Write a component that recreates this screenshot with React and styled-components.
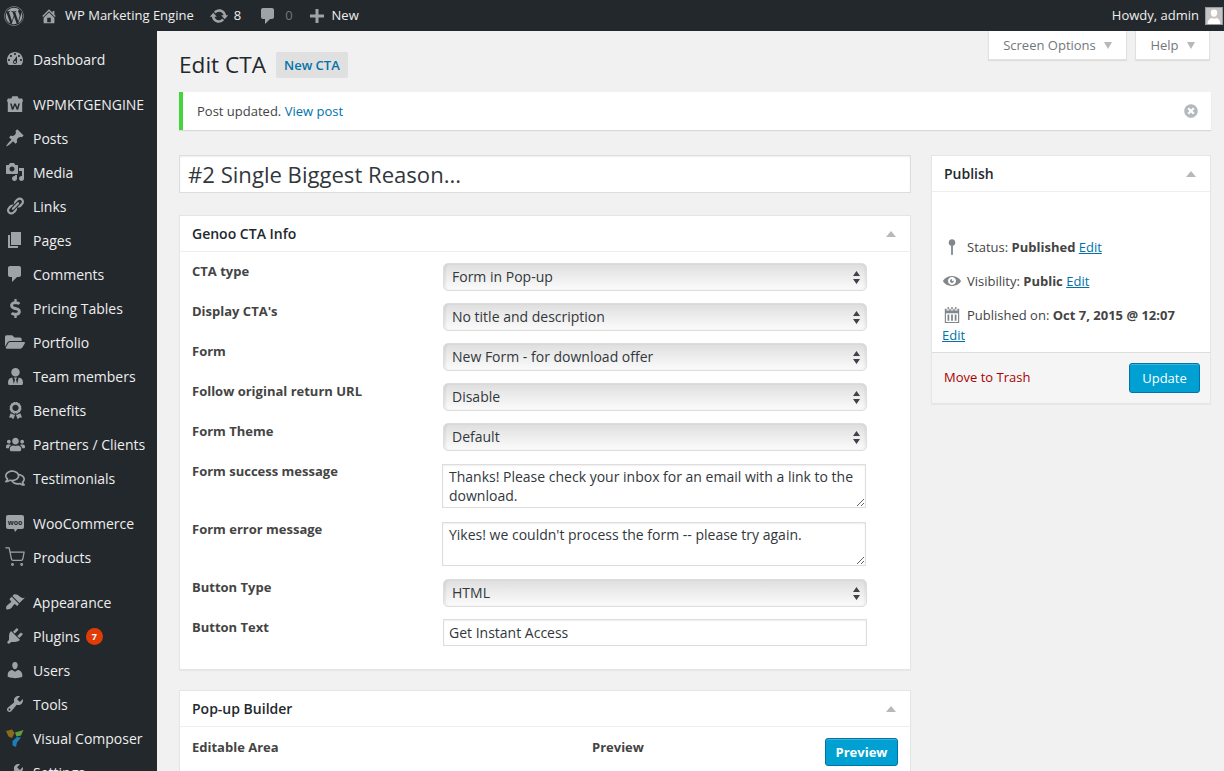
import React from "react";
import styled, { createGlobalStyle } from "styled-components";
import {
  FaWordpress,
  FaDollarSign,
  FaFolderOpen,
  FaUserTie,
  FaAward,
  FaUsers,
  FaRegComments,
  FaTimesCircle,
} from "react-icons/fa";
import { FiShoppingCart } from "react-icons/fi";

const D = {
  dashboard:
    "M3.76 16h12.48c1.1-1.37 1.76-3.11 1.76-5 0-4.42-3.58-8-8-8s-8 3.58-8 8c0 1.89.66 3.63 1.76 5zM10 4c.55 0 1 .45 1 1s-.45 1-1 1-1-.45-1-1 .45-1 1-1zM6 6c.55 0 1 .45 1 1s-.45 1-1 1-1-.45-1-1 .45-1 1-1zm8 0c.55 0 1 .45 1 1s-.45 1-1 1-1-.45-1-1 .45-1 1-1zm-5.37 5.55L12 7v6c0 1.1-.9 2-2 2s-2-.9-2-2c0-.57.24-1.08.63-1.45zM4 10c.55 0 1 .45 1 1s-.45 1-1 1-1-.45-1-1 .45-1 1-1zm12 0c.55 0 1 .45 1 1s-.45 1-1 1-1-.45-1-1 .45-1 1-1zm-5 3c0-.55-.45-1-1-1s-1 .45-1 1 .45 1 1 1 1-.45 1-1z",
  post: "M10.44 3.02l1.82-1.82 6.36 6.35-1.83 1.82c-1.05-.68-2.48-.57-3.41.36l-.75.75c-.92.93-1.04 2.35-.35 3.41l-1.83 1.82-2.41-2.41-2.8 2.79c-.42.42-3.38 2.71-3.8 2.29s1.86-3.39 2.28-3.81l2.79-2.79L4.1 9.36l1.83-1.82c1.05.69 2.48.57 3.4-.36l.75-.75c.93-.92 1.05-2.35.36-3.41z",
  media:
    "M13 11V4c0-.55-.45-1-1-1h-1.67L9 1H5L3.67 3H2c-.55 0-1 .45-1 1v7c0 .55.45 1 1 1h10c.55 0 1-.45 1-1zM7 4.5c1.38 0 2.5 1.12 2.5 2.5S8.38 9.5 7 9.5 4.5 8.38 4.5 7 5.62 4.5 7 4.5zM14 6h5v10.5c0 1.38-1.12 2.5-2.5 2.5S14 17.88 14 16.5s1.12-2.5 2.5-2.5c.17 0 .34.02.5.05V9h-3V6zm-4 8.05V13h2v3.5c0 1.38-1.12 2.5-2.5 2.5S7 17.88 7 16.5 8.12 14 9.5 14c.17 0 .34.02.5.05z",
  links:
    "M17.74 2.76c1.68 1.69 1.68 4.41 0 6.1l-1.53 1.52c-1.12 1.12-2.7 1.47-4.14 1.09l2.62-2.61.76-.77.76-.76c.84-.84.84-2.2 0-3.04-.84-.85-2.2-.85-3.04 0l-.77.76-3.38 3.38c-.37-1.44-.02-3.02 1.1-4.14l1.52-1.53c1.69-1.68 4.42-1.68 6.1 0zM8.59 13.43l5.34-5.34c.42-.42.42-1.1 0-1.52-.44-.43-1.13-.39-1.53 0l-5.33 5.34c-.42.42-.42 1.1 0 1.52.44.43 1.13.39 1.52 0zm-.76 2.29l4.14-4.15c.38 1.44.03 3.02-1.09 4.14l-1.52 1.53c-1.69 1.68-4.41 1.68-6.1 0-1.68-1.68-1.68-4.42 0-6.1l1.53-1.52c1.12-1.12 2.7-1.47 4.14-1.1l-4.14 4.15c-.85.84-.85 2.2 0 3.05.84.84 2.2.84 3.04 0z",
  page: "M6 15V2h10v13H6zm-1 1h8v2H3V5h2v11z",
  comment:
    "M5 2h9c1.1 0 2 .9 2 2v7c0 1.1-.9 2-2 2h-2l-5 5v-5H5c-1.1 0-2-.9-2-2V4c0-1.1.9-2 2-2z",
  appearance:
    "M14.48 11.06L7.41 3.99l1.5-1.5c.5-.56 2.3-.47 3.51.32 1.21.8 1.43 1.28 2.91 2.1 1.18.64 2.45 1.26 4.45.85zm-.71.71L6.7 4.7 4.93 6.47c-.39.39-.39 1.02 0 1.41l1.06 1.06c.39.39.39 1.03 0 1.42-.6.6-1.43 1.11-2.21 1.69-.35.26-.7.53-1.01.84C1.43 13.23.78 15.24 1.2 17.28c2.03.42 4.03-.24 5.37-1.57.31-.31.58-.66.84-1.01.58-.78 1.09-1.61 1.69-2.21.39-.39 1.02-.39 1.41 0l1.06 1.06c.39.39 1.02.39 1.41 0z",
  plugins:
    "M13.11 4.36L9.87 7.6 8 5.73l3.24-3.24c.35-.34 1.05-.2 1.56.32.52.51.66 1.21.31 1.55zm-8 1.77l.91-1.12 9.01 9.01-1.19.84c-.71.71-2.63 1.16-3.82 1.16H6.14L4.9 17.26c-.59.59-1.54.59-2.12 0-.59-.58-.59-1.53 0-2.12l1.24-1.24v-3.88c0-1.13.4-3.19 1.09-3.89zm7.26 3.97l3.24-3.24c.34-.35 1.04-.21 1.55.31.52.51.66 1.21.31 1.55l-3.24 3.25z",
  users:
    "M10 9.25c-2.27 0-2.73-3.44-2.73-3.44C7 4.02 7.82 2 9.97 2c2.16 0 2.98 2.02 2.71 3.81 0 0-.41 3.44-2.68 3.44zm0 2.57L12.72 10c2.39 0 4.52 2.33 4.52 4.53v2.49s-3.65 1.13-7.24 1.13c-3.65 0-7.24-1.13-7.24-1.13v-2.49c0-2.25 1.94-4.48 4.47-4.48z",
  tools:
    "M16.68 9.77c-1.34 1.34-3.3 1.67-4.95.99l-5.41 6.52c-.99.99-2.59.99-3.58 0s-.99-2.59 0-3.57l6.52-5.42c-.68-1.65-.35-3.61.99-4.95 1.28-1.28 3.12-1.62 4.72-1.06l-2.89 2.89 2.82 2.82 2.86-2.87c.53 1.58.18 3.39-1.08 4.65zM3.81 16.21c.4.39 1.04.39 1.43 0 .4-.4.4-1.04 0-1.43-.39-.4-1.03-.4-1.43 0-.39.39-.39 1.03 0 1.43z",
  home: "M16 8.5l1.53 1.53-1.06 1.06L10 4.62l-6.47 6.47-1.06-1.06L10 2.5l4 4v-2h2v4zm-6-2.46l6 5.99V18H4v-5.97zM12 17v-5H8v5h4z",
  update:
    "M10.2 3.28c3.53 0 6.43 2.61 6.92 6h2.08l-3.5 4-3.5-4h2.32c-.45-1.97-2.21-3.45-4.32-3.45-1.45 0-2.73.71-3.54 1.78L4.95 5.66C6.23 4.2 8.11 3.28 10.2 3.28zm-.4 13.44c-3.52 0-6.43-2.61-6.92-6H.8l3.5-4c1.17 1.33 2.33 2.67 3.5 4H5.48c.45 1.97 2.21 3.45 4.32 3.45 1.45 0 2.73-.71 3.54-1.78l1.71 1.95c-1.28 1.46-3.15 2.38-5.25 2.38z",
  plus: "M17 8.5v3h-5.5V17h-3v-5.5H3v-3h5.5V3h3v5.5H17z",
  eye: "M10 4.4C3.439 4.4 0 9.232 0 10c0 .766 3.439 5.6 10 5.6 6.56 0 10-4.834 10-5.6 0-.768-3.44-5.6-10-5.6zm0 9.907c-2.455 0-4.445-1.928-4.445-4.307S7.545 5.691 10 5.691s4.444 1.93 4.444 4.309-1.989 4.307-4.444 4.307zM10 10c-.407-.447.663-2.154 0-2.154-1.228 0-2.223.965-2.223 2.154s.995 2.154 2.223 2.154c1.227 0 2.223-1.828 2.223-2.154 0-.527-1.877.229-2.223 0z",
  pin: "M10 1.500a3.600 3.600 0 0 1 1 7.060V18l-1 1.500L9 18V8.560A3.600 3.600 0 0 1 10 1.500z",
  calendar:
    "M5 1h1.500v3H5V1zm8.500 0H15v3h-1.500V1zM9.200 1h1.600v3H9.200V1zM2 3h2v2h3V3h1.500v2h3V3H13v2h3V3h2v16H2V3zm1.300 5v9.700h13.400V8H3.300zM5 9.500h2v7H5v-7zm4 0h2v7H9v-7zm4 0h2v7h-2v-7z",
  bag: "M7 1.500h6L14 4h4l1 3-1 .8V19H2V7.800L1 7l1-3h4l1-2.500zM4.600 9.500l1.900 7h1.600l1.900-4.800 1.900 4.800h1.600l1.900-7h-1.700l-1.100 4.300-1.800-4.300H9.200l-1.800 4.300-1.100-4.300H4.600z",
};

const GlobalStyle = createGlobalStyle`
  html, body {
    margin: 0;
    height: 100%;
    overflow: hidden;
    background: #f1f1f1;
  }

  body {
    font-family: "Open Sans", sans-serif;
    font-size: 13px;
    color: #444;
  }

  * {
    box-sizing: border-box;
  }
`;

const Page = styled.div`
  height: 771px;
  overflow: hidden;
  display: flex;
  flex-direction: column;
`;

const TopBar = styled.header`
  flex: 0 0 31px;
  height: 31px;
  background: #23282d;
  color: #eee;
  display: flex;
  align-items: center;
  padding: 0 1px 0 4px;
  font-size: 13px;
  line-height: 31px;
`;

const BarIcon = styled.svg`
  width: ${({ size }) => size || 20}px;
  height: ${({ size }) => size || 20}px;
  fill: #9ea3a8;
  flex: none;
  display: block;
`;

const BarItem = styled.div`
  display: flex;
  align-items: center;
  gap: ${({ gap }) => gap || 8}px;
  margin-left: ${({ left }) => left || 0}px;
`;

const Faded = styled.span`
  color: #72777c;
`;

const Howdy = styled.div`
  margin-left: auto;
  display: flex;
  align-items: center;
  gap: 6px;
`;

const Avatar = styled.div`
  width: 18px;
  height: 18px;
  background: #f1f1f1;
  border: 1px solid #9a9a9a;
  overflow: hidden;
  flex: none;

  svg {
    display: block;
    width: 16px;
    height: 16px;
    background: #c4c4c4;
    fill: #fff;
  }
`;

const Body = styled.div`
  flex: 1;
  display: flex;
  min-height: 0;
`;

const Sidebar = styled.nav`
  flex: 0 0 157px;
  background: #23282d;
  padding-top: 11px;
  overflow: hidden;
`;

const MenuItem = styled.div`
  height: 34px;
  display: flex;
  align-items: center;
  color: #eee;
  font-size: 14px;
  margin-top: ${({ $sep }) => ($sep ? 11 : 0)}px;
  white-space: nowrap;
`;

const MenuIcon = styled.span`
  flex: 0 0 33px;
  padding-left: 5px;
  padding-right: 8px;
  display: flex;
  align-items: center;
  justify-content: center;
  color: #9ea3a8;

  svg {
    display: block;
    width: ${({ size }) => size || 20}px;
    height: ${({ size }) => size || 20}px;
    fill: currentColor;
    flex: none;
  }
`;

const CartIcon = styled(FiShoppingCart)`
  && {
    fill: none;
    stroke-width: 1.5;
  }
`;

const Badge = styled.span`
  display: inline-block;
  width: 17px;
  height: 17px;
  border-radius: 50%;
  background: #e23c06;
  color: #fff;
  font-size: 9px;
  font-weight: 700;
  line-height: 17px;
  text-align: center;
  margin-left: 6px;
`;

const Main = styled.main`
  flex: 1;
  min-width: 0;
  padding: 0 13px 0 22px;
  position: relative;
`;

const ScreenTabs = styled.div`
  display: flex;
  justify-content: flex-end;
  gap: 8px;
  padding-right: 1px;
`;

const ScreenTab = styled.div`
  height: 29px;
  width: ${({ width }) => width}px;
  background: #fff;
  border: 1px solid #e1e1e1;
  border-top: 0;
  box-shadow: 0 1px 1px rgba(0, 0, 0, 0.08);
  color: #72777c;
  display: flex;
  align-items: center;
  justify-content: center;
  gap: 8px;
  font-size: 13px;
`;

const Caret = styled.span`
  width: 0;
  height: 0;
  border-style: solid;
  border-color: #b4b9be transparent;
  border-width: ${({ $up }) => ($up ? "0 5px 6px" : "7px 4.5px 0")};
  flex: none;
`;

const Heading = styled.div`
  display: flex;
  align-items: center;
  gap: 10px;
  margin-top: -8px;
  height: 26px;
`;

const Title = styled.h1`
  margin: 0;
  font-size: 22.6px;
  font-weight: 400;
  color: #23282d;
  line-height: 26px;
`;

const AddNew = styled.a`
  background: #e0e0e0;
  color: #0073aa;
  font-size: 13px;
  font-weight: 600;
  height: 26px;
  line-height: 26px;
  padding: 0 8px;
  border-radius: 2px;
`;

const Notice = styled.div`
  margin-top: 14px;
  height: 38px;
  background: #fff;
  border-left: 4px solid #46d43c;
  box-shadow: 0 1px 1px rgba(0, 0, 0, 0.1);
  display: flex;
  align-items: center;
  padding: 0 13px 0 14px;
  font-size: 13px;
  color: #444;

  svg {
    margin-left: auto;
    width: 14px;
    height: 14px;
    fill: #b4b9be;
  }
`;

const Link = styled.a`
  color: #0073aa;
  text-decoration: ${({ $under }) => ($under ? "underline" : "none")};
`;

const Columns = styled.div`
  margin-top: 25px;
  display: grid;
  grid-template-columns: 732px 280px;
  gap: 20px;
  align-items: start;
`;

const Stack = styled.div`
  display: flex;
  flex-direction: column;
  min-width: 0;
`;

const TitleInput = styled.input`
  width: 100%;
  height: 38px;
  border: 1px solid #ddd;
  background: #fff;
  box-shadow: inset 0 1px 2px rgba(0, 0, 0, 0.07);
  font: 400 22.1px "Open Sans", sans-serif;
  color: #32373c;
  padding: 0 8px;
  margin: 0 0 22px;
  outline: none;
`;

const Box = styled.section`
  background: #fff;
  border: 1px solid #e5e5e5;
  box-shadow: 0 1px 1px rgba(0, 0, 0, 0.04);
  margin-bottom: 20px;
`;

const BoxHead = styled.div`
  height: 36px;
  display: flex;
  align-items: center;
  justify-content: space-between;
  padding: 0 14px 0 12px;
  border-bottom: 1px solid #eee;
  font-size: 14px;
  font-weight: 600;
  color: #23282d;
`;

const FormBody = styled.div`
  padding: 11px 12px 23px;
  display: flex;
  flex-direction: column;
`;

const Row = styled.div`
  display: grid;
  grid-template-columns: 251px 424px;
  margin-top: ${({ gap }) => gap || 0}px;
`;

const Label = styled.label`
  font-size: 13px;
  font-weight: 700;
  line-height: 16px;
  color: #444;
  margin-top: ${({ $raise }) => ($raise ? -1 : 0)}px;
`;

const SelectWrap = styled.div`
  position: relative;
  height: 28px;

  svg {
    position: absolute;
    right: 7px;
    top: 8px;
    width: 7px;
    height: 13px;
    fill: #3f4347;
    pointer-events: none;
  }
`;

const Select = styled.select`
  appearance: none;
  width: 100%;
  height: 28px;
  border: 1px solid #ddd;
  border-radius: 5px;
  background: linear-gradient(#dedede, #ececec 45%, #fbfbfb);
  box-shadow: inset 2px 0 2px rgba(0, 0, 0, 0.06), inset -2px 0 2px rgba(0, 0, 0, 0.04);
  font: 400 14px "Open Sans", sans-serif;
  color: #32373c;
  padding: 0 8px 2px;
  outline: none;
`;

const Textarea = styled.textarea`
  display: block;
  width: 424px;
  height: 44px;
  margin-left: -1px;
  border: 1px solid #ddd;
  background: #fff;
  box-shadow: inset 0 1px 2px rgba(0, 0, 0, 0.07);
  font: 400 14px/19px "Open Sans", sans-serif;
  color: #32373c;
  padding: 2px 6px;
  resize: both;
  outline: none;
`;

const TextInput = styled.input`
  display: block;
  width: 424px;
  height: 27px;
  border: 1px solid #ddd;
  background: #fff;
  box-shadow: inset 0 1px 2px rgba(0, 0, 0, 0.07);
  font: 400 14px "Open Sans", sans-serif;
  color: #32373c;
  padding: 0 5px;
  outline: none;
`;

const BuilderRow = styled.div`
  display: grid;
  grid-template-columns: 400px 233px auto;
  align-items: start;
  padding: 11px 12px 12px;

  label {
    padding-top: 1px;
  }
`;

const BlueButton = styled.button`
  background: #00a0d2;
  border: 1px solid #0073aa;
  border-radius: 3px;
  color: #fff;
  font: ${({ $bold }) => ($bold ? 700 : 400)} 13px "Open Sans", sans-serif;
  height: ${({ height }) => height}px;
  width: ${({ width }) => width}px;
  padding: 0;
  box-shadow: inset 0 1px 0 rgba(120, 200, 230, 0.5);
`;

const PublishBody = styled.div`
  padding: 45px 10px 0;
  height: 160px;
`;

const MetaRow = styled.div`
  display: flex;
  align-items: center;
  height: 20px;
  margin-bottom: 14px;
  white-space: nowrap;

  b {
    font-weight: 700;
  }
`;

const MetaIcon = styled.svg`
  width: ${({ size }) => size || 20}px;
  height: ${({ size }) => size || 20}px;
  fill: #82878c;
  flex: 0 0 auto;
  display: block;
`;

const MetaSlot = styled.span`
  width: 20px;
  margin-right: 5px;
  flex: none;
  display: flex;
  justify-content: center;
`;

const EditBelow = styled.div`
  margin-top: -13px;
  line-height: 18px;
`;

const PublishFoot = styled.div`
  height: 51px;
  background: #f5f5f5;
  border-top: 1px solid #ddd;
  display: flex;
  align-items: center;
  justify-content: space-between;
  padding: 0 10px 1px 12px;
`;

const Trash = styled.a`
  color: #a00;
  font-size: 13px;
  margin-top: -1px;
`;

const Glyph = ({ d, size, as: Wrapper = BarIcon }) => (
  <Wrapper viewBox="0 0 20 20" size={size}>
    <path d={d} />
  </Wrapper>
);

const Arrows = () => (
  <svg viewBox="0 0 7 13">
    <path d="M3.5 0L7 5H0zM3.5 13L0 8h7z" />
  </svg>
);

const WooIcon = () => (
  <svg viewBox="0 0 20 20">
    <path d="M3 2h14a2 2 0 0 1 2 2v10a2 2 0 0 1-2 2h-4.500l-2.500 3-1-3H3a2 2 0 0 1-2-2V4a2 2 0 0 1 2-2z" />
    <text x="10" y="11.500" textAnchor="middle" fontSize="7" fontWeight="700" fontFamily="Open Sans" fill="#23282d">
      woo
    </text>
  </svg>
);

const ComposerIcon = () => (
  <svg viewBox="0 0 20 20">
    <path fill="#8a6a1c" d="M1 3l6-1.500L9.500 5 7 10 3.500 8.500z" />
    <path fill="#5f9e3a" d="M10 4.500L18.500 2 16 7.500l-4.500 1z" />
    <path fill="#1c7fb6" d="M12 9l4 .5-4 5-1 4.500-3.500-1.500V13z" />
  </svg>
);

const menu = [
  { label: "Dashboard", d: D.dashboard },
  { label: "WPMKTGENGINE", d: D.bag, sep: true, size: 18 },
  { label: "Posts", d: D.post },
  { label: "Media", d: D.media },
  { label: "Links", d: D.links },
  { label: "Pages", d: D.page },
  { label: "Comments", d: D.comment },
  { label: "Pricing Tables", Icon: FaDollarSign, size: 19 },
  { label: "Portfolio", Icon: FaFolderOpen },
  { label: "Team members", Icon: FaUserTie, size: 17 },
  { label: "Benefits", Icon: FaAward, size: 17 },
  { label: "Partners / Clients", Icon: FaUsers, size: 19 },
  { label: "Testimonials", Icon: FaRegComments },
  { label: "WooCommerce", Icon: WooIcon, sep: true },
  { label: "Products", Icon: CartIcon },
  { label: "Appearance", d: D.appearance, sep: true },
  { label: "Plugins", d: D.plugins, badge: 7 },
  { label: "Users", d: D.users },
  { label: "Tools", d: D.tools },
  { label: "Visual Composer", Icon: ComposerIcon },
  { label: "Settings", d: D.tools },
];

const fields = [
  { label: "CTA type", kind: "select", value: "Form in Pop-up" },
  { label: "Display CTA's", kind: "select", value: "No title and description", gap: 12 },
  { label: "Form", kind: "select", value: "New Form - for download offer", gap: 12 },
  { label: "Follow original return URL", kind: "select", value: "Disable", gap: 12 },
  { label: "Form Theme", kind: "select", value: "Default", gap: 12 },
  {
    label: "Form success message",
    kind: "area",
    value: "Thanks! Please check your inbox for an email with a link to the download.",
    gap: 13,
  },
  {
    label: "Form error message",
    kind: "area",
    value: "Yikes! we couldn't process the form -- please try again.",
    gap: 14,
  },
  { label: "Button Type", kind: "select", value: "HTML", gap: 13 },
  { label: "Button Text", kind: "input", value: "Get Instant Access", gap: 12 },
];

const Field = ({ kind, value }) => {
  if (kind === "area") return <Textarea defaultValue={value} />;
  if (kind === "input") return <TextInput defaultValue={value} />;
  return (
    <SelectWrap>
      <Select defaultValue={value}>
        <option>{value}</option>
      </Select>
      <Arrows />
    </SelectWrap>
  );
};

const App = () => (
  <Page>
    <GlobalStyle />
    <TopBar>
      <FaWordpress size={20} color="#9ea3a8" />
      <BarItem left={16} gap={7}>
        <Glyph d={D.home} size={18} />
        WP Marketing Engine
      </BarItem>
      <BarItem left={15} gap={5}>
        <Glyph d={D.update} size={20} />8
      </BarItem>
      <BarItem left={17} gap={7}>
        <Glyph d={D.comment} size={20} />
        <Faded>0</Faded>
      </BarItem>
      <BarItem left={14} gap={5}>
        <Glyph d={D.plus} size={20} />
        New
      </BarItem>
      <Howdy>
        Howdy, admin
        <Avatar>
          <svg viewBox="0 0 20 20">
            <path d="M10 11c-2.800 0-4-3-4-5.500C6 3 7.700 2 10 2s4 1 4 3.500S12.800 11 10 11zm-8 9c0-5 3-7 5-7.500 1 1 5 1 6 0 2 .5 5 2.500 5 7.500z" />
          </svg>
        </Avatar>
      </Howdy>
    </TopBar>
    <Body>
      <Sidebar>
        {menu.map(({ label, d, Icon, sep, size, badge }) => (
          <MenuItem key={label} $sep={sep}>
            <MenuIcon size={size}>
              {d ? (
                <svg viewBox="0 0 20 20">
                  <path d={d} />
                </svg>
              ) : (
                <Icon />
              )}
            </MenuIcon>
            {label}
            {badge && <Badge>{badge}</Badge>}
          </MenuItem>
        ))}
      </Sidebar>
      <Main>
        <ScreenTabs>
          <ScreenTab width={139}>
            Screen Options <Caret />
          </ScreenTab>
          <ScreenTab width={75}>
            Help <Caret />
          </ScreenTab>
        </ScreenTabs>
        <Heading>
          <Title>Edit CTA</Title>
          <AddNew>New CTA</AddNew>
        </Heading>
        <Notice>
          <span>
            Post updated. <Link>View post</Link>
          </span>
          <FaTimesCircle />
        </Notice>
        <Columns>
          <Stack>
            <TitleInput defaultValue="#2 Single Biggest Reason..." />
            <Box>
              <BoxHead>
                Genoo CTA Info <Caret $up />
              </BoxHead>
              <FormBody>
                {fields.map(({ label, kind, value, gap }) => (
                  <Row key={label} gap={gap}>
                    <Label $raise={kind === "area"}>{label}</Label>
                    <Field kind={kind} value={value} />
                  </Row>
                ))}
              </FormBody>
            </Box>
            <Box>
              <BoxHead>
                Pop-up Builder <Caret $up />
              </BoxHead>
              <BuilderRow>
                <Label>Editable Area</Label>
                <Label>Preview</Label>
                <BlueButton $bold width={73} height={28}>
                  Preview
                </BlueButton>
              </BuilderRow>
            </Box>
          </Stack>
          <Stack>
            <Box>
              <BoxHead>
                Publish <Caret $up />
              </BoxHead>
              <PublishBody>
                <MetaRow>
                  <MetaSlot>
                    <Glyph as={MetaIcon} d={D.pin} size={18} />
                  </MetaSlot>
                  <span>
                    Status: <b>Published</b> <Link $under>Edit</Link>
                  </span>
                </MetaRow>
                <MetaRow>
                  <MetaSlot>
                    <Glyph as={MetaIcon} d={D.eye} size={18} />
                  </MetaSlot>
                  <span>
                    Visibility: <b>Public</b> <Link $under>Edit</Link>
                  </span>
                </MetaRow>
                <MetaRow>
                  <MetaSlot>
                    <Glyph as={MetaIcon} d={D.calendar} size={18} />
                  </MetaSlot>
                  <span>
                    Published on: <b>Oct 7, 2015 @ 12:07</b>
                  </span>
                </MetaRow>
                <EditBelow>
                  <Link $under>Edit</Link>
                </EditBelow>
              </PublishBody>
              <PublishFoot>
                <Trash>Move to Trash</Trash>
                <BlueButton width={71} height={30}>
                  Update
                </BlueButton>
              </PublishFoot>
            </Box>
          </Stack>
        </Columns>
      </Main>
    </Body>
  </Page>
);

export default App;
